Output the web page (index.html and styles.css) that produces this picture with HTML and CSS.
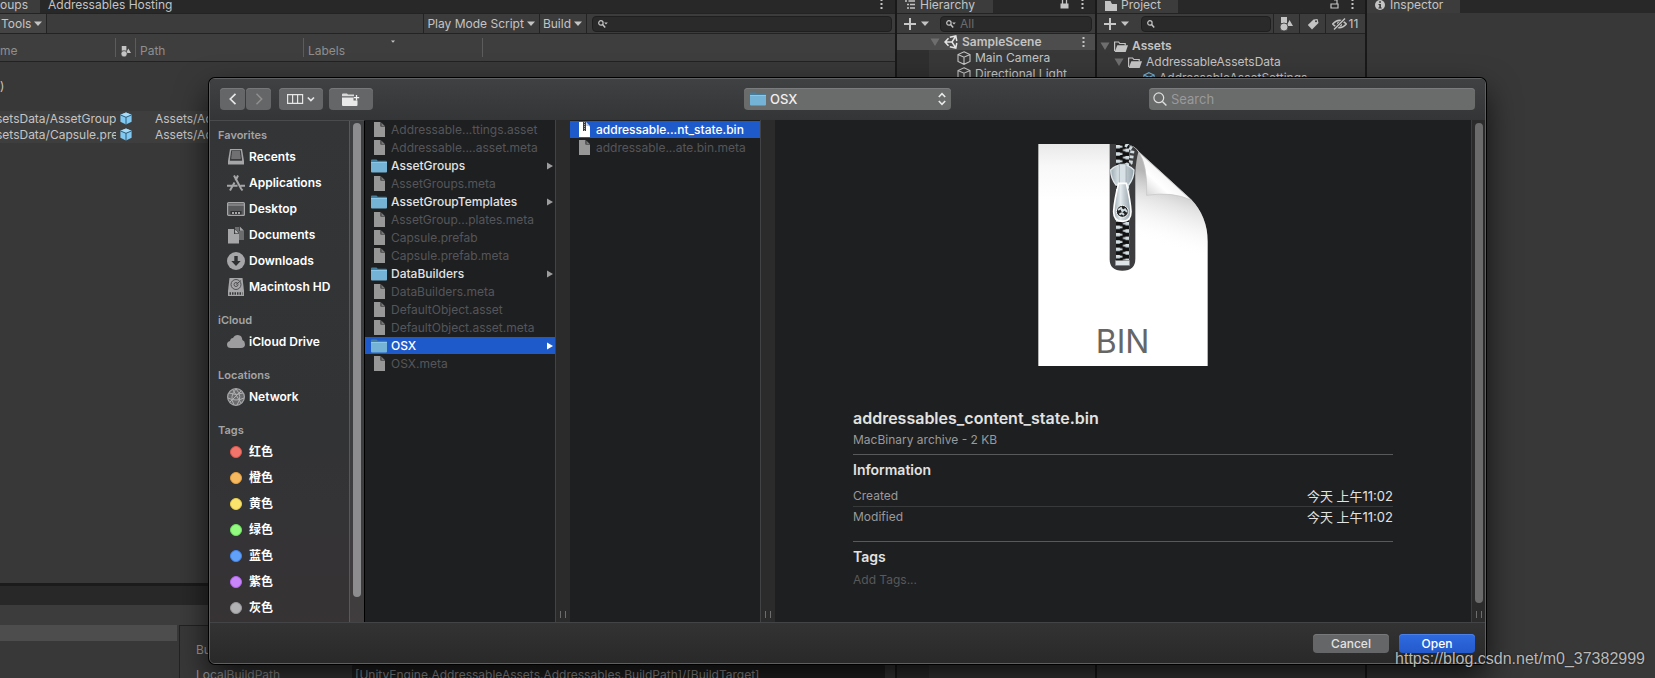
FILE: index.html
```html
<!DOCTYPE html>
<html lang="en">
<head>
<meta charset="utf-8">
<title>Addressables</title>
<link rel="stylesheet" href="styles.css">
</head>
<body>
<svg class="defs" aria-hidden="true">
  <symbol id="caret" viewBox="0 0 8 5"><path d="M0 .5h8L4 5z" fill="#c4c4c4"/></symbol>
  <symbol id="fold" viewBox="0 0 10 8"><path d="M.5.5h9L5 8z" fill="#6e6e6e"/></symbol>
  <symbol id="plus" viewBox="0 0 12 12"><path d="M6 0v12M0 6h12" stroke="#c8c8c8" stroke-width="2"/></symbol>
  <symbol id="dots" viewBox="0 0 3 10"><path d="M.5 0h2v2h-2zM.5 4h2v2h-2zM.5 8h2v2h-2z" fill="#c4c4c4"/></symbol>
  <symbol id="lens" viewBox="0 0 10 8"><circle cx="2.9" cy="2.9" r="2.2" fill="none" stroke="#c4c4c4" stroke-width="1.2"/><path d="M4.6 4.6l2.6 2.8" stroke="#c4c4c4" stroke-width="1.5"/></symbol>
  <symbol id="lensmenu" viewBox="0 0 10 8"><circle cx="2.9" cy="2.9" r="2.2" fill="none" stroke="#c4c4c4" stroke-width="1.2"/><path d="M4.6 4.6l2.6 2.8" stroke="#c4c4c4" stroke-width="1.5"/><path d="M6.2 2.5h3.6L8 4.5z" fill="#c4c4c4"/></symbol>
  <symbol id="shapes" viewBox="0 0 13 14"><path d="M1 0h6v6H1zM9.5 3L13 9H6.500z" fill="#c4c4c4"/><circle cx="4" cy="10" r="4" fill="#c4c4c4" stroke="#3c3c3c" stroke-width=".8"/></symbol>
  <symbol id="prefab" viewBox="0 0 12 13"><path d="M6 .5l5.600 2.300v7L6 12.600.4 9.800v-7z" fill="#7fc9f2"/><path d="M6 .5l5.600 2.300L6 5.200.4 2.800z" fill="#a5dcfa"/><path d="M.4 2.900L6 5.300l5.600-2.400M6 5.300v7.200" fill="none" stroke="#2f5a76" stroke-width="1"/></symbol>
  <symbol id="cube" viewBox="0 0 14 14"><path d="M7 .8l6 2.700v7L7 13.300l-6-2.800v-7zM1 3.500l6 2.700 6-2.700M7 6.200v7" fill="none" stroke="#c4c4c4" stroke-width="1.100"/></symbol>
  <symbol id="asset" viewBox="0 0 14 14"><path d="M7 .8l6 2.700v7L7 13.300l-6-2.800v-7zM1 3.500l6 2.700 6-2.700M7 6.200v7" fill="none" stroke="#6fb8e0" stroke-width="1.200"/></symbol>
  <symbol id="openfolder" viewBox="0 0 14 11"><path d="M.6 10V1h4l1.200 1.500h5.400v2" fill="none" stroke="#c4c4c4" stroke-width="1.200"/><path d="M3.300 4.300H14L11.700 11H.7z" fill="#c4c4c4"/></symbol>
  <symbol id="lock" viewBox="0 0 9 9"><path d="M2.500 4V0M6.500 4V0" stroke="#c4c4c4" stroke-width="1.300"/><path d="M.5 3.500h8V8.500h-8z" fill="#c4c4c4"/></symbol>
  <symbol id="unlock" viewBox="0 0 9 9"><path d="M1 4h7v4H1zM7 4V0H4" fill="none" stroke="#c4c4c4" stroke-width="1.200"/></symbol>
  <symbol id="file" viewBox="0 0 11 15"><path d="M0 0h6.500v4.500H11V15H0z" fill="#979797"/><path d="M7.300.4L10.800 4H7.300z" fill="#777"/></symbol>
  <symbol id="folder" viewBox="0 0 16 14"><path d="M0 1.500Q0 .5 1 .5h4.500l1.300 1.300H15q1 0 1 1V6H0z" fill="#467f9e"/><path d="M0 3h16v9.500q0 1-1 1H1q-1 0-1-1z" fill="#75b3d6"/><path d="M0 3h16v1H0z" fill="#8ac7e8"/></symbol>
  <symbol id="next" viewBox="0 0 6 8"><path d="M0 .5v7L6 4z" fill="currentColor"/></symbol>
</svg>

<main class="editor">
  <section class="pane">
    <div class="tabs">
      <span class="tab tab-cut">oups</span><span class="tab-off">Addressables Hosting</span>
      <svg class="dots tab-end"><use href="#dots"/></svg>
    </div>
    <div class="toolbar">
      <button class="tool tool-cut">Tools<svg class="caret"><use href="#caret"/></svg></button>
      <span class="grow"></span>
      <button class="tool edge">Play Mode Script<svg class="caret"><use href="#caret"/></svg></button>
      <button class="tool">Build<svg class="caret"><use href="#caret"/></svg></button>
      <label class="find find-wide"><svg class="lens"><use href="#lensmenu"/></svg><input type="text" aria-label="Search groups"></label>
    </div>
    <table class="groups">
      <colgroup><col class="c-name"><col class="c-icon"><col class="c-path"><col class="c-labels"><col></colgroup>
      <thead><tr><th class="cut">me</th><th class="mid"><svg class="shapes-small"><use href="#shapes"/></svg></th><th>Path</th><th class="sorted">Labels<svg class="sort"><use href="#caret"/></svg></th><th class="last"></th></tr></thead>
      <tbody>
        <tr class="group"><td class="cut">t)</td><td></td><td></td><td></td><td></td></tr>
        <tr class="spacer"><td colspan="5"></td></tr>
        <tr class="entry"><td class="cut">setsData/AssetGroups</td><td class="mid"><svg class="prefab"><use href="#prefab"/></svg></td><td class="path">Assets/Ad</td><td></td><td></td></tr>
        <tr class="entry"><td class="cut">setsData/Capsule.pre</td><td class="mid"><svg class="prefab"><use href="#prefab"/></svg></td><td class="path">Assets/Ad</td><td></td><td></td></tr>
      </tbody>
    </table>
    <div class="profiles">
      <div class="profiles-tabs"></div>
      <div class="profiles-bar"></div>
      <div class="profiles-body">
        <div class="profile-list"><div class="profile-selected"></div></div>
        <div class="variables">
          <div class="variable"><span>Bu</span></div>
          <div class="variable"><label for="localpath">LocalBuildPath</label><input id="localpath" type="text" value="[UnityEngine.AddressableAssets.Addressables.BuildPath]/[BuildTarget]"></div>
        </div>
      </div>
    </div>
  </section>

  <section class="pane">
    <div class="tabs">
      <span class="tab tab-hier"><svg class="ic10" viewBox="0 0 10 10"><path d="M0 1h2M3.500 1H10M2 4.500h2M5 4.500h5M2 8h2M5 8h5" stroke="#c4c4c4" stroke-width="1.300"/></svg>Hierarchy</span>
      <svg class="lock tab-end"><use href="#lock"/></svg><svg class="dots tab-more"><use href="#dots"/></svg>
    </div>
    <div class="toolbar">
      <button class="add" aria-label="Create"><svg class="plus"><use href="#plus"/></svg><svg class="caret"><use href="#caret"/></svg></button>
      <label class="find find-hier"><svg class="lens"><use href="#lensmenu"/></svg><input type="text" placeholder="All" aria-label="Search hierarchy"></label>
    </div>
    <div class="tree">
      <div class="scene"><svg class="fold"><use href="#fold"/></svg><svg class="ic14" viewBox="0 0 14 14"><path d="M5.800 2.300L11.800 1l1 5M12.800 8l-1 5-6-1.300M4.500 3.200L1 7l3.500 3.800M1.500 7H8M8 7l3.600-5.600M8 7l3.600 5.600" fill="none" stroke="#e4e4e4" stroke-width="1.500"/></svg><b>SampleScene</b><svg class="dots tab-end"><use href="#dots"/></svg></div>
      <div class="objects">
        <div class="object"><svg class="ic14"><use href="#cube"/></svg>Main Camera</div>
        <div class="object"><svg class="ic14"><use href="#cube"/></svg>Directional Light</div>
      </div>
    </div>
  </section>

  <section class="pane">
    <div class="tabs">
      <span class="tab tab-proj"><svg class="ic12" viewBox="0 0 12 10"><path d="M0 0h5.500l1.500 3H12v7H0z" fill="#c4c4c4"/></svg>Project</span>
      <svg class="lock tab-end"><use href="#unlock"/></svg><svg class="dots tab-more"><use href="#dots"/></svg>
    </div>
    <div class="toolbar">
      <button class="add" aria-label="Create"><svg class="plus"><use href="#plus"/></svg><svg class="caret"><use href="#caret"/></svg></button>
      <label class="find find-proj"><svg class="lens"><use href="#lens"/></svg><input type="text" aria-label="Search project"></label>
      <button class="filter" aria-label="Filter by type"><svg class="shapes"><use href="#shapes"/></svg></button>
      <button class="filter" aria-label="Filter by label"><svg class="ic12" viewBox="0 0 12 12"><path d="M6.500 1.500L10.500 1l1 4L5 11.500.8 7z" fill="#c4c4c4"/><circle cx="9" cy="3.300" r="1" fill="#3c3c3c"/></svg></button>
      <button class="filter hidden-count"><svg class="eye" viewBox="0 0 15 12"><path d="M.6 6Q7.500-1.500 14.400 6 7.500 13.500.6 6z" fill="none" stroke="#c4c4c4" stroke-width="1.300"/><circle cx="7.500" cy="6" r="2.600" fill="#c4c4c4"/><path d="M2 11.500L13 .5" stroke="#3c3c3c" stroke-width="3"/><path d="M2 11.500L13 .5" stroke="#c4c4c4" stroke-width="1.400"/></svg>11</button>
    </div>
    <div class="assets">
      <div class="asset"><svg class="fold"><use href="#fold"/></svg><svg class="of"><use href="#openfolder"/></svg><b>Assets</b></div>
      <div class="asset level2"><svg class="fold"><use href="#fold"/></svg><svg class="of"><use href="#openfolder"/></svg>AddressableAssetsData</div>
      <div class="asset level3"><svg class="ic12"><use href="#asset"/></svg>AddressableAssetSettings</div>
    </div>
  </section>

  <section class="pane">
    <div class="tabs">
      <span class="tab tab-insp"><svg class="ic10" viewBox="0 0 10 10"><circle cx="5" cy="5" r="5" fill="#c4c4c4"/><path d="M4.200 1.200h1.700v1.600H4.200zM3.500 4h2.400v3.500h.8v1H3.400v-1h.9V5h-.8z" fill="#333"/></svg>Inspector</span>
    </div>
  </section>
</main>

<section class="dialog" role="dialog" aria-label="Open file">
  <header class="titlebar">
    <div class="nav">
      <div class="nav-pair">
        <button class="mac arrow" aria-label="Back"><svg class="ic12" viewBox="0 0 12 12"><path d="M8.500.8L3.300 6l5.200 5.200" fill="none" stroke="#e6e6e6" stroke-width="1.700"/></svg></button>
        <button class="mac arrow" aria-label="Forward"><svg class="ic12" viewBox="0 0 12 12"><path d="M3.500.8L8.700 6l-5.200 5.200" fill="none" stroke="#8f8f8f" stroke-width="1.500"/></svg></button>
      </div>
      <button class="mac wide" aria-label="View"><svg class="columns-icon" viewBox="0 0 28 10"><path d="M.6.6h15v8.800h-15zM5.600.6v8.800M10.600.6v8.800" fill="none" stroke="#e6e6e6" stroke-width="1.200"/><path d="M20.800 3.500l3.100 3 3.100-3" fill="none" stroke="#e6e6e6" stroke-width="1.700"/></svg></button>
      <button class="mac wide newfolder" aria-label="New folder"><svg class="folder-icon" viewBox="0 0 18 13"><path d="M0 3.200V1.500Q0 .6 1 .6h4l1 1h6v1.600z" fill="#d8d8d8"/><path d="M0 4.400h11.500v3h4V12q0 1-1 1H1q-1 0-1-1z" fill="#e9e9e9"/><path d="M14.500 2v5.500M11.800 4.700h5.400" stroke="#f2f2f2" stroke-width="1.300"/></svg></button>
    </div>
    <div class="popup">
      <svg class="folder"><use href="#folder"/></svg>
      <select aria-label="Folder"><option>OSX</option></select>
      <svg class="updown" viewBox="0 0 8 14"><path d="M.8 5L4 1.600 7.200 5M.8 9L4 12.400 7.200 9" fill="none" stroke="#e8e8e8" stroke-width="1.600"/></svg>
    </div>
    <label class="search"><svg class="ic14" viewBox="0 0 14 14"><circle cx="5.800" cy="5.800" r="4.900" fill="none" stroke="#dedede" stroke-width="1.200"/><path d="M9.400 9.400l4 4" stroke="#dedede" stroke-width="1.400"/></svg><input type="text" placeholder="Search" aria-label="Search"></label>
  </header>

  <div class="browser">
    <nav class="sidebar">
      <div class="places">
        <h2>Favorites</h2>
        <ul>
          <li><svg class="ic18" viewBox="0 0 18 18"><path d="M3 1h12l2 12v3.500H1V13z" fill="#a6a6a8"/><path d="M4.200 2.300h9.600l1.300 9.400v1H2.900v-1z" fill="#3a3b3d"/><path d="M5 4h8M4.800 6h8.400M4.500 8h9M4.300 10h9.400" stroke="#a6a6a8"/></svg>Recents</li>
          <li><svg class="ic18" viewBox="0 0 18 18"><path d="M7 1.500l7 13 1.500 2M11 1.500L8.500 6.500M7.500 8.500L3 16.500M0 11.800h10.500M13.500 11.800H18" fill="none" stroke="#a6a6a8" stroke-width="2"/></svg>Applications</li>
          <li><svg class="ic18" viewBox="0 0 18 18"><rect x=".6" y="2.600" width="16.800" height="12.800" rx="1" fill="#58595b" stroke="#a6a6a8" stroke-width="1.200"/><path d="M1 5h16" stroke="#a6a6a8"/><path d="M3.500 11h11v3.500h-11z" fill="#303133"/><path d="M5 13h2M8 13h2M11 13h2" stroke="#ccc" stroke-width="1.500"/></svg>Desktop</li>
          <li><svg class="ic18" viewBox="0 0 18 18"><path d="M8 1h4v4h5v9H8z" fill="#6b6c6e"/><path d="M12.800.5L17 4.700h-4.200zM1 3h6v5h5v9.500H1z" fill="#a6a6a8"/><path d="M7.800 3L12 7.200H7.800z" fill="#d0d0d0" stroke="#303133" stroke-width=".6"/></svg>Documents</li>
          <li><svg class="ic18" viewBox="0 0 18 18"><circle cx="9" cy="9" r="9" fill="#a6a6a8"/><path d="M7.300 4h3.400v5h3L9 14 4.300 9h3z" fill="#303133"/></svg>Downloads</li>
          <li><svg class="ic18" viewBox="0 0 18 18"><path d="M2.500 0h13l1.500 13v5H1v-5z" fill="#a6a6a8"/><circle cx="9" cy="6.500" r="5" fill="none" stroke="#505153"/><circle cx="9" cy="6.500" r="2" fill="none" stroke="#505153"/><path d="M9 6.500l5-4" stroke="#505153"/><path d="M2.500 15.500h13" stroke="#38393b" stroke-width="2.500" stroke-dasharray="1.500 1"/></svg>Macintosh HD</li>
        </ul>
        <h2>iCloud</h2>
        <ul>
          <li><svg class="ic18" viewBox="0 0 18 18"><path d="M4 15Q0 15 0 11.500 0 8.500 3 8 3.500 5 6 5 7.500 2 10.800 2q4.200.2 4.600 5Q18 8 18 11.200 18 15 14 15z" fill="#9d9d9f"/></svg>iCloud Drive</li>
        </ul>
        <h2>Locations</h2>
        <ul>
          <li><svg class="ic18" viewBox="0 0 18 18"><circle cx="9" cy="9" r="8.400" fill="#6a6b6d" stroke="#a6a6a8" stroke-width="1.200"/><path d="M2 5q7 3 14 0M1 10q8 4 16 0M9 1Q2 8 7 17M9 1q7 7 1 16M3 14L14 3M6 2l8 13" fill="none" stroke="#b0b0b2"/></svg>Network</li>
        </ul>
        <h2>Tags</h2>
        <ul>
          <li><i class="dot red"></i>红色</li>
          <li><i class="dot orange"></i>橙色</li>
          <li><i class="dot yellow"></i>黄色</li>
          <li><i class="dot green"></i>绿色</li>
          <li><i class="dot blue"></i>蓝色</li>
          <li><i class="dot purple"></i>紫色</li>
          <li><i class="dot gray"></i>灰色</li>
        </ul>
      </div>
      <div class="track side-track"><div class="thumb"></div></div>
    </nav>

    <ul class="files">
      <li><svg class="file"><use href="#file"/></svg>Addressable...ttings.asset</li>
      <li><svg class="file"><use href="#file"/></svg>Addressable....asset.meta</li>
      <li class="dir"><svg class="folder"><use href="#folder"/></svg>AssetGroups<svg class="next"><use href="#next"/></svg></li>
      <li><svg class="file"><use href="#file"/></svg>AssetGroups.meta</li>
      <li class="dir"><svg class="folder"><use href="#folder"/></svg>AssetGroupTemplates<svg class="next"><use href="#next"/></svg></li>
      <li><svg class="file"><use href="#file"/></svg>AssetGroup...plates.meta</li>
      <li><svg class="file"><use href="#file"/></svg>Capsule.prefab</li>
      <li><svg class="file"><use href="#file"/></svg>Capsule.prefab.meta</li>
      <li class="dir"><svg class="folder"><use href="#folder"/></svg>DataBuilders<svg class="next"><use href="#next"/></svg></li>
      <li><svg class="file"><use href="#file"/></svg>DataBuilders.meta</li>
      <li><svg class="file"><use href="#file"/></svg>DefaultObject.asset</li>
      <li><svg class="file"><use href="#file"/></svg>DefaultObject.asset.meta</li>
      <li class="dir selected"><svg class="folder"><use href="#folder"/></svg>OSX<svg class="next"><use href="#next"/></svg></li>
      <li><svg class="file"><use href="#file"/></svg>OSX.meta</li>
    </ul>
    <div class="splitter"><i class="grip"></i></div>
    <ul class="files second">
      <li class="selected"><svg class="file" viewBox="0 0 11 15"><path d="M0 0h7l4 4.500V15H0z" fill="#fff"/><path d="M7.300.4L10.800 4H7.300z" fill="#b9c6dd"/><path d="M4 0h3v9H4z" fill="#3c3c3e"/><path d="M5.500 0v9" stroke="#aaa" stroke-dasharray="1 1"/></svg>addressable...nt_state.bin</li>
      <li><svg class="file"><use href="#file"/></svg>addressable...ate.bin.meta</li>
    </ul>
    <div class="splitter"><i class="grip"></i></div>
    <article class="preview">
      <svg class="bin" viewBox="57 42 508 666" role="img" aria-label="BIN file">
        <defs>
          <linearGradient id="paper" x1="0" y1="0" x2="0" y2="1"><stop offset="0" stop-color="#e9e9e9"/><stop offset=".1" stop-color="#f8f8f8"/><stop offset=".25" stop-color="#fff"/></linearGradient>
          <linearGradient id="shade" gradientUnits="userSpaceOnUse" x1="460" y1="150" x2="400" y2="340"><stop offset="0" stop-color="#999" stop-opacity=".7"/><stop offset=".35" stop-color="#bbb" stop-opacity=".4"/><stop offset="1" stop-color="#fff" stop-opacity="0"/></linearGradient>
          <linearGradient id="curl" gradientUnits="userSpaceOnUse" x1="385" y1="190" x2="450" y2="120"><stop offset="0" stop-color="#dcdcdc"/><stop offset=".45" stop-color="#fff"/><stop offset="1" stop-color="#f1f1f1"/></linearGradient>
          <linearGradient id="metal"><stop offset="0" stop-color="#9babb3"/><stop offset=".4" stop-color="#e4ebee"/><stop offset=".6" stop-color="#c4ced3"/><stop offset="1" stop-color="#94a3ab"/></linearGradient>
          <pattern id="teeth" x="290" y="42" width="40" height="22" patternUnits="userSpaceOnUse"><rect width="40" height="22" fill="#111"/><path d="M0 3h12v2h7v6h-7v2H0z" fill="#d2dde2"/><path d="M40 14H28v2h-7v5h7v1h12zM40 0H28v2h12z" fill="#d2dde2"/></pattern>
        </defs>
        <path d="M57 42H320Q345 45 360 66L515 208Q565 260 565 335V708H57z" fill="url(#paper)"/>
        <path d="M348 66H360L515 208Q565 260 565 335V400H348z" fill="url(#shade)"/>
        <path d="M357 66Q385 100 382 196 460 184 515 210 440 140 357 66z" fill="url(#curl)" stroke="#c4c4c4" stroke-width="2"/>
        <path d="M271 42H320Q345 46 357 66 350 90 348 130V386Q348 422 309 422T271 386z" fill="#3d3c3e"/>
        <path d="M290 42h40v350h-40z" fill="url(#teeth)"/>
        <path d="M318 44l22 14-6 40-18 10" fill="none" stroke="#d2dde2" stroke-width="12" stroke-dasharray="8 7"/>
        <rect x="288" y="392" width="43" height="14" fill="#dde3e6" stroke="#888" stroke-width="2"/>
        <path d="M274 120Q290 104 309 104T344 120Q344 145 328 165H290Q274 145 274 120z" fill="url(#metal)" stroke="#dfe7ea" stroke-width="4"/>
        <path d="M300 102h20v62h-20z" fill="#d8e1e5" stroke="#93a1a8" stroke-width="2"/>
        <path d="M298 160h23q12 50 14 85 0 29-26 29t-26-29q2-35 15-85z" fill="url(#metal)" stroke="#fff" stroke-width="5"/>
        <circle cx="309" cy="244" r="18" fill="#222" stroke="#f2f5f6" stroke-width="3"/>
        <path d="M296 240l9-6 4 9 8-5 6 8M300 254l8-5 6 6" fill="none" stroke="#cfdbe0" stroke-width="6"/>
        <text class="bin-name" x="310" y="668">BIN</text>
      </svg>
      <div class="info">
        <h1>addressables_content_state.bin</h1>
        <p class="kind">MacBinary archive - 2 KB</p>
        <h3>Information</h3>
        <dl>
          <div><dt>Created</dt><dd>今天 上午11:02</dd></div>
          <div><dt>Modified</dt><dd>今天 上午11:02</dd></div>
        </dl>
        <h3>Tags</h3>
        <input class="add-tags" type="text" placeholder="Add Tags..." aria-label="Add tags">
      </div>
    </article>
    <div class="track end-track"><div class="thumb"></div><i class="grip"></i></div>
  </div>

  <footer class="actions">
    <button class="mac cancel">Cancel</button>
    <button class="mac open">Open</button>
  </footer>
</section>
<div class="watermark">https://blog.csdn.net/m0_37382999</div>
</body>
</html>
```

FILE: styles.css
```css
* { box-sizing: border-box; }
body {
  margin: 0;
  height: 100vh;
  overflow: hidden;
  position: relative;
  background: #191919;
  color: #c4c4c4;
  font: 12px/16px Inter, "Noto Sans CJK SC", sans-serif;
}
button, input, select { font: inherit; color: inherit; margin: 0; padding: 0; border: 0; background: none; outline: 0; }
ul, dl, dd, p, h1, h2, h3 { margin: 0; padding: 0; list-style: none; }
svg { display: block; flex: none; }
.defs { position: absolute; width: 0; height: 0; }
.grow { flex: 1; }

.caret { width: 8px; height: 5px; }
.fold { width: 10px; height: 8px; }
.plus { width: 12px; height: 12px; }
.dots { width: 3px; height: 10px; }
.lens { width: 10px; height: 8px; }
.lock { width: 9px; height: 9px; }
.shapes { width: 13px; height: 14px; }
.shapes-small { width: 10px; height: 11px; }
.prefab { width: 12px; height: 13px; }
.of { width: 14px; height: 11px; }
.eye { width: 15px; height: 12px; }
.ic10 { width: 10px; height: 10px; }
.ic12 { width: 12px; height: 12px; }
.ic14 { width: 14px; height: 14px; }
.ic18 { width: 18px; height: 18px; }
.file { width: 11px; height: 15px; }
.folder { width: 16px; height: 14px; }
.next { width: 6px; height: 8px; }

/* Editor panes */
.editor { display: grid; grid-template-columns: 895fr 198fr 268fr 288fr; gap: 2px; height: 100%; }
.pane { display: flex; flex-direction: column; min-width: 0; overflow: hidden; background: #383838; }
.tabs { display: flex; flex: none; height: 13px; background: #282828; line-height: 10px; }
.tab { display: flex; gap: 5px; background: #3c3c3c; padding: 0 8px; }
.tab-cut { width: 40px; padding: 0; }
.tab-off { padding-left: 8px; }
.tab-hier { width: 96px; }
.tab-proj { width: 81px; gap: 4px; }
.tab-insp { width: 93px; }
.tab-end { margin-left: auto; margin-right: 12px; }
.tabs .dots { height: 10px; margin-top: -1px; }
.tab-more { margin-right: 11px; }
.toolbar { display: flex; flex: none; align-items: center; height: 21px; background: #3c3c3c; border-top: 1px solid #232323; border-bottom: 1px solid #232323; }
.tool { display: flex; align-items: center; gap: 3px; height: 100%; padding: 0 4px 0 3px; border-right: 1px solid #232323; white-space: nowrap; }
.tool-cut { width: 47px; padding: 0 0 0 1px; background: #444; }
.edge { border-left: 1px solid #232323; }
.find { display: flex; flex: 1; align-items: center; gap: 4px; min-width: 0; height: 16px; padding: 0 5px; background: #2a2a2a; border: 1px solid #1f1f1f; border-radius: 4px; }
.find input { flex: 1; min-width: 0; }
.find input::placeholder { color: #6c6c6c; opacity: 1; }
.find-wide { flex: 0 0 300px; margin: 0 3px 0 5px; }
.find-hier { margin: 0 3px 0 11px; }
.find-proj { margin: 0 2px 0 12px; }
.add { display: flex; align-items: center; gap: 5px; margin-left: 7px; }
.filter { display: flex; align-items: center; justify-content: center; width: 26px; height: 100%; border-left: 1px solid #232323; }
.hidden-count { width: 40px; gap: 2px; padding-right: 1px; }

.groups { width: 100%; table-layout: fixed; border-collapse: collapse; white-space: nowrap; }
.c-name { width: 116px; }
.c-icon { width: 20px; }
.c-path { width: 168px; }
.c-labels { width: 179px; }
.groups th { height: 27px; padding: 8px 0 0 4px; text-align: left; font-weight: 400; color: #8e8e8e; background: linear-gradient(#5c5c5c, #5c5c5c) right 4px / 1px 19px no-repeat #3e3e3e; border-bottom: 1px solid #222; overflow: hidden; }
.groups th.last { background: #3e3e3e; }
.groups td { height: 16px; padding: 0; overflow: hidden; }
.groups th.cut { padding-left: 0; }
.groups td.cut { text-indent: -4px; }
.groups th.mid { padding-left: 5px; }
.groups td.mid { padding-left: 4px; }
.groups .path { padding-left: 19px; }
.groups .group td { height: 32px; padding-top: 16px; }
.groups .spacer td { height: 17px; }
.groups .entry { background: #3e3e3e; }
.sorted { position: relative; }
.sort { position: absolute; left: 87px; top: 6px; width: 4px; height: 3px; }

.profiles { margin-top: auto; height: 95px; border-top: 3px solid #1b1b1b; }
.profiles-tabs { height: 19px; background: #282828; }
.profiles-bar { height: 20px; background: #3c3c3c; }
.profiles-body { display: flex; height: 53px; }
.profile-list { width: 179px; padding-right: 2px; }
.profile-selected { height: 16px; background: #4d4d4d; }
.variables { flex: 1; margin-right: 10px; padding: 11px 0 0 16px; border-left: 1px solid #222; border-top: 1px solid #222; color: #9a9a9a; }
.variable { display: flex; height: 25px; line-height: 25px; }
.variable label { width: 156px; }
.variable input { flex: 1; height: 20px; padding: 0 3px; margin-top: 2px; background: #222; border-radius: 3px; }

.tree { flex: 1; background: #2f2f2f; }
.scene { display: flex; align-items: center; gap: 4px; height: 16px; padding-left: 33px; background: #4d4d4d; }
.scene .dots { margin-right: 10px; }
.scene b, .asset b { font-weight: 600; }
.objects { margin-left: 32px; height: 100%; background: #383838; }
.object { display: flex; align-items: center; gap: 4px; height: 16px; padding-left: 28px; white-space: nowrap; }
.assets { padding-top: 4px; }
.asset { display: flex; align-items: center; gap: 4px; height: 16px; padding-left: 3px; white-space: nowrap; }
.level2 { padding-left: 17px; }
.level3 { padding-left: 46px; }

/* Open dialog */
.dialog {
  position: absolute;
  left: 209px;
  right: 169px;
  top: 78px;
  bottom: 14px;
  display: flex;
  flex-direction: column;
  overflow: hidden;
  border: 1px solid #5f6061;
  border-radius: 6px;
  background: #1e1f21;
  box-shadow: 0 0 0 1px #000, 0 14px 32px rgba(0, 0, 0, .7);
  font-weight: 500;
}
.titlebar { display: grid; grid-template-columns: 1fr 207px 1fr; align-items: center; flex: none; height: 41px; padding: 0 10px 1px; background: linear-gradient(#404143, #343537); }
.nav { display: flex; gap: 6px; }
.nav-pair { display: flex; gap: 1px; margin-right: 2px; }
.mac { display: flex; align-items: center; justify-content: center; height: 22px; border-radius: 4px; background: #656667; box-shadow: inset 0 1px #77787a; }
.arrow { width: 25px; }
.wide { width: 44px; }
.columns-icon { width: 28px; height: 10px; }
.folder-icon { width: 18px; height: 13px; }
.popup { position: relative; height: 22px; }
.popup select { width: 100%; height: 22px; padding-left: 26px; border-radius: 4px; background: #6a6b6b; box-shadow: inset 0 1px #7b7c7d; color: #f0f0f0; appearance: none; font-size: 13px; }
.popup .folder { position: absolute; left: 6px; top: 4px; }
.updown { position: absolute; right: 5px; top: 4px; width: 8px; height: 14px; }
.search { display: flex; align-items: center; gap: 4px; justify-self: end; width: 326px; height: 22px; padding: 0 4px; border-radius: 4px; background: #6a6b6b; box-shadow: inset 0 1px #7b7c7d; font-size: 13px; font-weight: 400; }
.search input { flex: 1; }
.search input::placeholder { color: #999a9b; opacity: 1; }

.browser { display: flex; flex: 1; min-height: 0; }
.sidebar { display: flex; flex: none; width: 155px; background: linear-gradient(#343537, #323335 60%, #373335); border-top: 1px solid #4a4b4d; border-right: 1px solid #000; }
.places { flex: 1; min-width: 0; padding-top: 5px; }
.places h2 { padding-left: 8px; font-size: 11px; line-height: 18px; font-weight: 600; color: #a4a4a5; }
.places ul { margin-bottom: 11px; }
.places li { display: flex; align-items: center; gap: 4px; height: 26px; padding-left: 17px; color: #fff; font-weight: 600; white-space: nowrap; }
.dot { width: 12px; height: 12px; margin: 0 3px; border-radius: 50%; border: 1px solid; }
.red { background: #f2756b; border-color: #e0564d; }
.orange { background: #f7b95f; border-color: #e8a13e; }
.yellow { background: #fbe46d; border-color: #e8cf4d; }
.green { background: #92fb80; border-color: #70e262; }
.blue { background: #62a1fa; border-color: #4286ee; }
.purple { background: #c986fb; border-color: #b566ee; }
.gray { background: #b2b2b5; border-color: #9a9a9d; }

.track { flex: none; display: flex; flex-direction: column; width: 15px; padding: 2px 3px 25px; border-left: 1px solid #58595b; }
.thumb { flex: 1; width: 8px; border-radius: 4px; background: #8d8d90; }
.side-track { background: rgba(255, 255, 255, .05); }
.end-track { width: 14px; padding: 3px 2px 4px; background: #2b2b2b; border-left-color: #3c3d3e; align-items: center; gap: 8px; }
.end-track .thumb { background: #6b6b6b; }
.grip { width: 6px; height: 7px; border: solid #6d6d6d; border-width: 0 1px; }

.files { flex: none; width: 190px; padding-top: 1px; }
.files li { display: flex; align-items: center; height: 17px; margin-bottom: 1px; padding: 0 2px 0 9px; gap: 6px; color: #55565a; font-weight: 400; white-space: nowrap; }
.files .dir { padding-left: 6px; gap: 4px; color: #e2e2e2; font-weight: 500; }
.files .selected { background: #1f5acb; color: #fff; font-weight: 500; }
.files .next { margin-left: auto; color: #9d9d9d; }
.files .selected .next { color: #fff; }
.splitter { flex: none; display: flex; justify-content: center; align-items: flex-end; width: 15px; padding-bottom: 4px; background: #2b2b2b; border-left: 1px solid #424344; }

.preview { flex: 1; min-width: 0; display: flex; flex-direction: column; align-items: center; padding-top: 24px; }
.bin { width: 170px; height: 222px; }
.bin-name { font-size: 96px; font-weight: 400; fill: #666; text-anchor: middle; font-family: Inter, sans-serif; }
.info { width: 100%; max-width: 540px; margin-top: 41px; color: #9a9a9b; font-weight: 400; }
.info h1 { font-size: 16px; line-height: 22px; font-weight: 600; color: #e2e2e2; }
.kind { line-height: 20px; padding: 1px 0 4px; }
.info h3 { padding-top: 5px; border-top: 1px solid #58595a; font-size: 14px; line-height: 20px; font-weight: 600; color: #e2e2e2; }
.info dl { padding: 6px 0 14px; }
.info dl div { display: flex; justify-content: space-between; line-height: 20px; }
.info dl div + div { border-top: 1px solid #38393a; }
.info dd { color: #e2e2e2; font-size: 13px; }
.add-tags { width: 100%; height: 18px; margin-top: 3px; display: block; }
.add-tags::placeholder { color: #58595a; opacity: 1; }

.actions { display: flex; justify-content: flex-end; gap: 10px; flex: none; height: 41px; padding: 11px 10px 0; background: linear-gradient(#333, #292929); border-top: 1px solid #434445; }
.actions .mac { width: 76px; height: 19px; color: #e2e2e2; }
.actions .open { background: linear-gradient(#2f6be0, #2459cb); box-shadow: inset 0 1px #4a80e8; color: #fff; }

.watermark { position: absolute; right: 10px; bottom: 9px; font: 16px/20px "Liberation Sans", Arial, sans-serif; color: #b9b9b9; text-shadow: 0 0 2px rgba(0, 0, 0, .7); }
```
